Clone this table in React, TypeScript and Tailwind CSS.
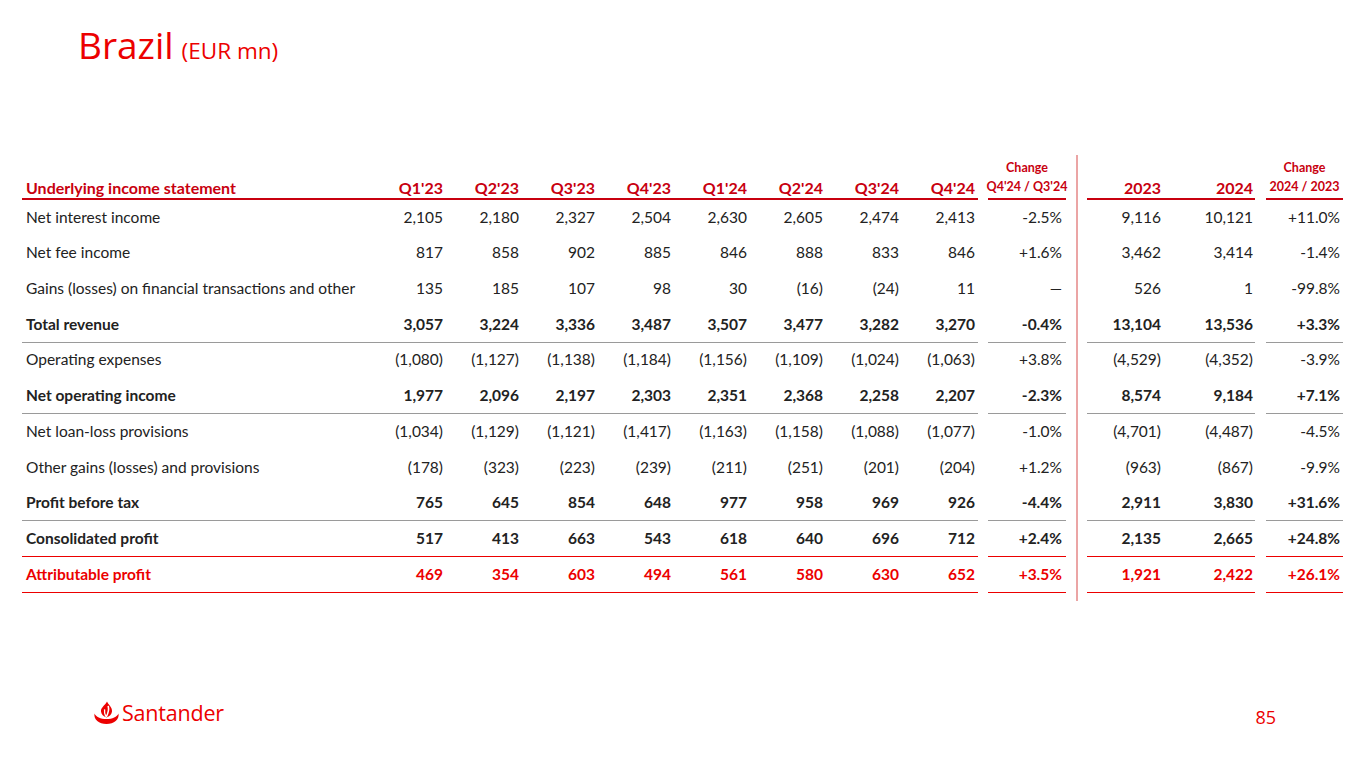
import React from "react";

type Row = {
  label: string;
  q: string[];
  ch: string;
  y: string[];
  ch2: string;
  bold?: boolean;
  red?: boolean;
  line?: "gray" | "red";
};

const rows: Row[] = [
  { label: "Net interest income", q: ["2,105", "2,180", "2,327", "2,504", "2,630", "2,605", "2,474", "2,413"], ch: "-2.5%", y: ["9,116", "10,121"], ch2: "+11.0%" },
  { label: "Net fee income", q: ["817", "858", "902", "885", "846", "888", "833", "846"], ch: "+1.6%", y: ["3,462", "3,414"], ch2: "-1.4%" },
  { label: "Gains (losses) on financial transactions and other", q: ["135", "185", "107", "98", "30", "(16)", "(24)", "11"], ch: "—", y: ["526", "1"], ch2: "-99.8%" },
  { label: "Total revenue", q: ["3,057", "3,224", "3,336", "3,487", "3,507", "3,477", "3,282", "3,270"], ch: "-0.4%", y: ["13,104", "13,536"], ch2: "+3.3%", bold: true, line: "gray" },
  { label: "Operating expenses", q: ["(1,080)", "(1,127)", "(1,138)", "(1,184)", "(1,156)", "(1,109)", "(1,024)", "(1,063)"], ch: "+3.8%", y: ["(4,529)", "(4,352)"], ch2: "-3.9%" },
  { label: "Net operating income", q: ["1,977", "2,096", "2,197", "2,303", "2,351", "2,368", "2,258", "2,207"], ch: "-2.3%", y: ["8,574", "9,184"], ch2: "+7.1%", bold: true, line: "gray" },
  { label: "Net loan-loss provisions", q: ["(1,034)", "(1,129)", "(1,121)", "(1,417)", "(1,163)", "(1,158)", "(1,088)", "(1,077)"], ch: "-1.0%", y: ["(4,701)", "(4,487)"], ch2: "-4.5%" },
  { label: "Other gains (losses) and provisions", q: ["(178)", "(323)", "(223)", "(239)", "(211)", "(251)", "(201)", "(204)"], ch: "+1.2%", y: ["(963)", "(867)"], ch2: "-9.9%" },
  { label: "Profit before tax", q: ["765", "645", "854", "648", "977", "958", "969", "926"], ch: "-4.4%", y: ["2,911", "3,830"], ch2: "+31.6%", bold: true, line: "gray" },
  { label: "Consolidated profit", q: ["517", "413", "663", "543", "618", "640", "696", "712"], ch: "+2.4%", y: ["2,135", "2,665"], ch2: "+24.8%", bold: true, line: "red" },
  { label: "Attributable profit", q: ["469", "354", "603", "494", "561", "580", "630", "652"], ch: "+3.5%", y: ["1,921", "2,422"], ch2: "+26.1%", bold: true, red: true, line: "red" },
];

const quarters = ["Q1'23", "Q2'23", "Q3'23", "Q4'23", "Q1'24", "Q2'24", "Q3'24", "Q4'24"];

function Separator() {
  return (
    <div className="w-[21px] flex justify-center self-stretch">
      <div className="w-[2px] bg-[#eba5a5]" />
    </div>
  );
}

function Flame() {
  return (
    <svg width="27" height="24" viewBox="0 0 27 24" className="shrink-0">
      <path d="M1.5 12.5 C3 16 7.5 18 13.5 18 C19.5 18 24 16 25.5 12.5 C26.5 18.5 21 23 13.5 23 C6 23 0.5 18.5 1.5 12.5 Z" fill="#ec0000" />
      <path d="M14 0.5 C15 3.5 19.5 6 19 10.5 C18.7 13.5 16.5 15.5 13.5 16.5 C10.5 15.5 8.3 13.5 8 10.5 C7.6 6.5 12 4.5 14 0.5 Z" fill="#ec0000" />
      <path d="M15.2 4.8 C15.8 7.5 16.5 10 13.2 16" stroke="white" strokeWidth="1.6" fill="none" />
      <path d="M11.6 8.4 C11.2 11 11.6 13 12.8 15.6" stroke="white" strokeWidth="1.3" fill="none" />
    </svg>
  );
}

export default function App() {
  return (
    <div className="w-[1365px] h-[768px] bg-white relative overflow-hidden flex flex-col" style={{ fontFamily: '"Open Sans", "Noto Sans", sans-serif' }}>
      <div className="pl-[78px] pt-[21px] h-[80px] flex items-baseline text-[#ec0000]">
        <span className="text-[37px] leading-[48px]">Brazil</span>
        <span className="text-[22.5px] ml-[8px]">(EUR mn)</span>
      </div>

      <div className="mt-[75px] pl-[22px] flex flex-col text-[15.5px] text-[#222]" style={{ fontFamily: 'Lato, "Open Sans", sans-serif' }}>
        {/* header */}
        <div className="flex h-[45px] font-bold text-[#c8000f]">
          <div className="w-[956px] flex items-end border-b-2 border-[#c8000f] leading-[20px]">
            <div className="w-[348px] pl-[4px] text-[16px]">Underlying income statement</div>
            {quarters.map((q) => (
              <div key={q} className="w-[76px] text-right pr-[3px] text-[16px]">{q}</div>
            ))}
          </div>
          <div className="w-[10px]" />
          <div className="w-[78px] flex flex-col justify-between items-center border-b-2 border-[#c8000f] pt-[4px] pb-[2px] text-[12.5px]">
            <div>Change</div>
            <div className="whitespace-nowrap">Q4'24 / Q3'24</div>
          </div>
          <Separator />
          <div className="w-[168px] flex items-end border-b-2 border-[#c8000f] leading-[20px] text-[16px]">
            <div className="w-[76px] text-right pr-[2px]">2023</div>
            <div className="w-[92px] text-right pr-[2px]">2024</div>
          </div>
          <div className="w-[11px]" />
          <div className="w-[77px] flex flex-col justify-between items-center border-b-2 border-[#c8000f] pt-[4px] pb-[2px] text-[12.5px]">
            <div>Change</div>
            <div className="whitespace-nowrap">2024 / 2023</div>
          </div>
        </div>

        {rows.map((r) => {
          const border = r.line === "gray" ? "border-b border-[#9a9a9a]" : r.line === "red" ? "border-b border-[#ec0000]" : "border-b border-transparent";
          const cls = `${r.bold ? "font-bold" : ""} ${r.red ? "text-[#ec0000]" : ""}`;
          return (
            <div key={r.label} className={`flex h-[35.7px] ${cls}`}>
              <div className={`w-[956px] flex items-center ${border}`}>
                <div className="w-[348px] pl-[4px] whitespace-nowrap">{r.label}</div>
                {r.q.map((v, i) => (
                  <div key={i} className="w-[76px] text-right pr-[3px]">{v}</div>
                ))}
              </div>
              <div className="w-[10px]" />
              <div className={`w-[78px] flex items-center justify-end pr-[4px] ${border}`}>{r.ch}</div>
              <Separator />
              <div className={`w-[168px] flex items-center ${border}`}>
                <div className="w-[76px] text-right pr-[2px]">{r.y[0]}</div>
                <div className="w-[92px] text-right pr-[2px]">{r.y[1]}</div>
              </div>
              <div className="w-[11px]" />
              <div className={`w-[77px] flex items-center justify-end pr-[3px] ${border}`}>{r.ch2}</div>
            </div>
          );
        })}
        <div className="flex h-[8px]">
          <div className="w-[1044px]" />
          <Separator />
        </div>
      </div>

      <div className="flex-1" />
      <div className="h-[76px] flex items-start pt-[6px]">
        <div className="pl-[93px] flex items-center gap-[2px] text-[#ec0000]">
          <Flame />
          <span className="text-[21.5px] leading-[30px] tracking-[-0.2px]">Santander</span>
        </div>
        <div className="flex-1" />
        <div className="pr-[89px] pt-[4px] text-[18px] leading-[30px] text-[#ec0000]">85</div>
      </div>
    </div>
  );
}
